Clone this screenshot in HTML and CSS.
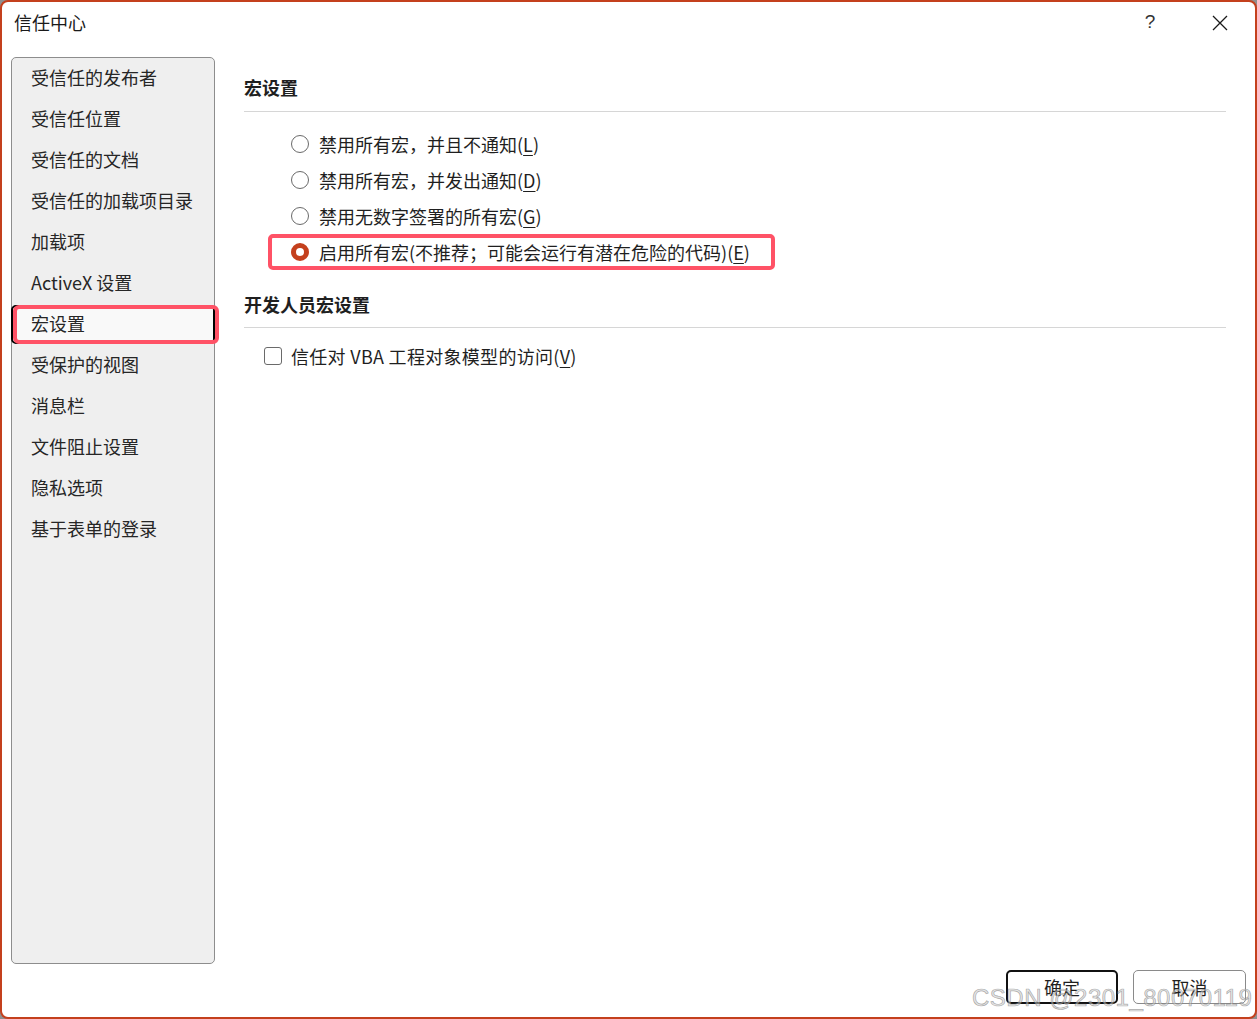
FILE: index.html
```html
<!DOCTYPE html>
<html lang="zh-CN">
<head>
<meta charset="utf-8">
<title>信任中心</title>
<link rel="stylesheet" href="styles.css">
</head>
<body>
<div class="window">
  <div class="titlebar">
    <div class="title">信任中心</div>
    <div class="help">?</div>
    <div class="close">
      <svg width="16" height="16" viewBox="0 0 16 16"><path d="M1 1 L15 15 M15 1 L1 15" stroke="#1a1a1a" stroke-width="1.3" fill="none"/></svg>
    </div>
  </div>
  <div class="main">
    <nav class="nav">
      <div class="nav-item">受信任的发布者</div>
      <div class="nav-item">受信任位置</div>
      <div class="nav-item">受信任的文档</div>
      <div class="nav-item">受信任的加载项目录</div>
      <div class="nav-item">加载项</div>
      <div class="nav-item">ActiveX 设置</div>
      <div class="nav-item selected"><span class="sel-inner">宏设置</span></div>
      <div class="nav-item">受保护的视图</div>
      <div class="nav-item">消息栏</div>
      <div class="nav-item">文件阻止设置</div>
      <div class="nav-item">隐私选项</div>
      <div class="nav-item">基于表单的登录</div>
    </nav>
    <section class="content">
      <h2 class="section-head first">宏设置</h2>
      <div class="options">
        <div class="option"><span class="radio"></span><span>禁用所有宏，并且不通知(<u>L</u>)</span></div>
        <div class="option"><span class="radio"></span><span>禁用所有宏，并发出通知(<u>D</u>)</span></div>
        <div class="option"><span class="radio"></span><span>禁用无数字签署的所有宏(<u>G</u>)</span></div>
        <div class="option marked"><span class="radio checked"></span><span>启用所有宏(不推荐；可能会运行有潜在危险的代码)(<u>E</u>)</span></div>
      </div>
      <h2 class="section-head second">开发人员宏设置</h2>
      <div class="check-row"><span class="checkbox"></span><span class="check-label">信任对 VBA 工程对象模型的访问(<u>V</u>)</span></div>
    </section>
  </div>
  <div class="footer">
    <div class="btn default">确定</div>
    <div class="btn">取消</div>
  </div>
  <div class="watermark">CSDN @2301_80070119</div>
</div>
</body>
</html>
```
FILE: styles.css
```css
html, body {
  margin: 0;
  padding: 0;
  background: #8f8f8f;
}
body {
  width: 1257px;
  height: 1019px;
  overflow: hidden;
  font-family: "Noto Sans CJK SC", "Noto Sans", sans-serif;
  color: #1f1f1f;
}
.window {
  position: relative;
  box-sizing: border-box;
  width: 1257px;
  height: 1019px;
  border: 2px solid #c4401d;
  border-radius: 8px;
  background: #ffffff;
  display: flex;
  flex-direction: column;
  padding-bottom: 12px;
}
.titlebar {
  height: 40px;
  display: flex;
  align-items: center;
  padding-left: 12px;
  padding-right: 12px;
}
.title {
  flex: 1;
  font-size: 18px;
  line-height: 24px;
  color: #1a1a1a;
}
.help {
  width: 40px;
  text-align: center;
  font-family: "Liberation Sans", sans-serif;
  font-size: 19px;
  line-height: 24px;
  color: #333;
  margin-right: 27px;
}
.close {
  width: 46px;
  display: flex;
  justify-content: center;
  align-items: center;
  padding-top: 2px;
}
.main {
  display: flex;
  margin-top: 15px;
  height: 907px;
}
.nav {
  box-sizing: border-box;
  width: 204px;
  height: 907px;
  margin-left: 9px;
  border: 1px solid #8d8d8d;
  border-radius: 5px;
  background: #efefef;
  display: flex;
  flex-direction: column;
}
.nav-item {
  height: 41px;
  line-height: 38px;
  font-size: 18px;
  padding-left: 19px;
  color: #262626;
  white-space: nowrap;
}
.nav-item.selected {
  position: relative;
  padding-left: 0;
  margin-left: -1px;
  margin-right: -1px;
}
.sel-inner {
  display: block;
  box-sizing: border-box;
  height: 39px;
  margin-top: 1px;
  line-height: 32px;
  padding-left: 18px;
  background: #f9f9f9;
  border: 2px solid #000;
  border-radius: 5px;
}
.nav-item.selected::after {
  content: "";
  position: absolute;
  left: 2px;
  right: -4px;
  top: 1px;
  height: 39px;
  box-sizing: border-box;
  border: 4px solid #ff5266;
  border-radius: 6px;
}
.content {
  flex: 1;
  margin-left: 29px;
  margin-right: 29px;
}
.section-head {
  margin: 0;
  font-size: 18px;
  font-weight: 700;
  line-height: 24px;
  padding-bottom: 11px;
  border-bottom: 1px solid #d6d6d6;
  color: #1f1f1f;
}
.section-head.first {
  margin-top: 18px;
  padding-bottom: 12px;
}
.section-head.second {
  margin-top: 22px;
}
.options {
  margin-top: 14px;
  display: flex;
  flex-direction: column;
}
.option {
  position: relative;
  height: 36px;
  display: flex;
  align-items: center;
  padding-left: 46px;
  gap: 10px;
  font-size: 18px;
  white-space: nowrap;
}
.option.marked::after {
  content: "";
  position: absolute;
  left: 24px;
  top: 0;
  width: 507px;
  height: 36px;
  box-sizing: border-box;
  border: 4px solid #ff5266;
  border-radius: 5px;
}
u {
  text-decoration: underline;
  text-underline-offset: 3px;
  text-decoration-thickness: 1px;
}
.radio {
  box-sizing: border-box;
  width: 18px;
  height: 18px;
  border-radius: 50%;
  border: 1.5px solid #6a6a6a;
  background: #fff;
  flex: none;
  margin-left: 1px;
}
.radio.checked {
  border: 5px solid #c4401d;
}
.check-row {
  margin-top: 10px;
  height: 36px;
  display: flex;
  align-items: center;
  padding-left: 20px;
  gap: 9px;
  font-size: 18px;
  white-space: nowrap;
}
.check-label {
  letter-spacing: 0.3px;
}
.checkbox {
  box-sizing: border-box;
  width: 18px;
  height: 18px;
  border: 1.5px solid #6a6a6a;
  border-radius: 3px;
  background: #fff;
  flex: none;
}
.footer {
  margin-top: 6px;
  display: flex;
  justify-content: flex-end;
  gap: 15px;
  padding-right: 9px;
}
.btn {
  box-sizing: border-box;
  width: 113px;
  height: 34px;
  border: 1px solid #8a8a8a;
  border-radius: 5px;
  display: flex;
  align-items: center;
  justify-content: center;
  font-size: 18px;
  color: #1f1f1f;
  background: #fff;
}
.btn.default {
  width: 112px;
  border: 2px solid #111;
}
.watermark {
  position: absolute;
  left: 970px;
  top: 981px;
  font-family: "Liberation Sans", sans-serif;
  font-size: 24px;
  line-height: 30px;
  color: rgba(205, 205, 205, 0.55);
  -webkit-text-stroke: 0.7px rgba(110, 110, 110, 0.55);
  white-space: nowrap;
  letter-spacing: 0.5px;
}
```
